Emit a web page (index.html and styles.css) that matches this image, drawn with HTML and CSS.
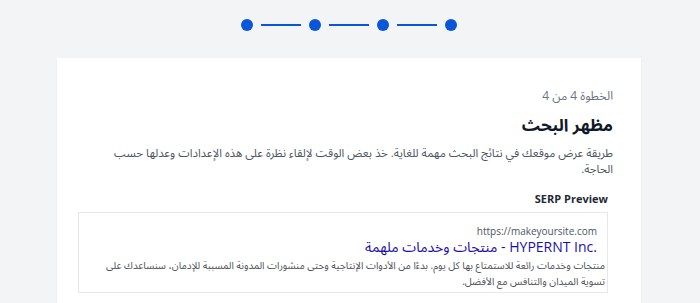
FILE: index.html
```html
<!DOCTYPE html>
<html lang="ar" dir="rtl">
<head>
<meta charset="utf-8">
<link rel="stylesheet" href="styles.css">
</head>
<body>
<div class="page">
  <div class="stepper" dir="ltr">
    <span class="dot"></span><span class="bar"></span>
    <span class="dot"></span><span class="bar"></span>
    <span class="dot"></span><span class="bar"></span>
    <span class="dot"></span>
  </div>
  <div class="card">
    <div class="step">الخطوة 4 من 4</div>
    <h1 class="title">مظهر البحث</h1>
    <p class="desc">طريقة عرض موقعك في نتائج البحث مهمة للغاية. خذ بعض الوقت لإلقاء نظرة على هذه الإعدادات وعدلها حسب الحاجة.</p>
    <div class="serp">
      <div class="serp-label">SERP Preview</div>
      <div class="serp-box">
        <div class="serp-url">https://makeyoursite.com</div>
        <div class="serp-title"><span dir="ltr">HYPERNT Inc.</span> - منتجات وخدمات ملهمة</div>
        <div class="serp-desc">منتجات وخدمات رائعة للاستمتاع بها كل يوم. بدءًا من الأدوات الإنتاجية وحتى منشورات المدونة المسببة للإدمان، سنساعدك على تسوية الميدان والتنافس مع الأفضل.</div>
      </div>
    </div>
  </div>
</div>
</body>
</html>
```

FILE: styles.css
```css
html, body {
  margin: 0;
  padding: 0;
  background: #f3f4f6;
  font-family: "Open Sans", "Noto Sans Arabic", "DejaVu Sans", sans-serif;
}

.page {
  padding: 0 2px 0 0;
  height: 303px;
  overflow: hidden;
}

.stepper {
  display: flex;
  align-items: center;
  justify-content: center;
  gap: 8px;
  padding-top: 19px;
  height: 12px;
}

.dot {
  width: 12px;
  height: 12px;
  border-radius: 50%;
  background: #0a56d8;
}

.bar {
  width: 40px;
  height: 2px;
  background: #0a56d8;
}

.card {
  width: 584px;
  margin: 27px auto 0;
  background: #fff;
  box-shadow: 0 1px 2px rgba(0, 0, 0, 0.06);
  padding: 28px 28px 20px 28px;
  box-sizing: border-box;
  height: 260px;
}

.step {
  font-size: 12px;
  line-height: 18px;
  color: #6b7280;
  margin-top: 1px;
}

.title {
  margin: 7px 0 0;
  font-size: 17px;
  line-height: 26px;
  font-weight: 700;
  color: #111827;
}

.desc {
  margin: 7px 0 0;
  font-size: 11.5px;
  line-height: 16px;
  color: #4b5563;
}

.serp {
  margin: 15px 5px 0 -7px;
}

.serp-label {
  font-size: 11px;
  line-height: 14px;
  font-weight: 700;
  color: #1f2937;
}

.serp-box {
  margin-top: 6px;
  border: 1px solid #e5e7eb;
  padding: 12px 10px 3px 2px;
}

.serp-url {
  font-size: 10px;
  line-height: 13px;
  color: #4b5563;
}

.serp-title {
  font-size: 14px;
  line-height: 17px;
  color: #1a0dab;
}

.serp-desc {
  margin: 2px -8px 0 0;
  font-size: 10px;
  line-height: 16px;
  color: #4d5156;
}
```
